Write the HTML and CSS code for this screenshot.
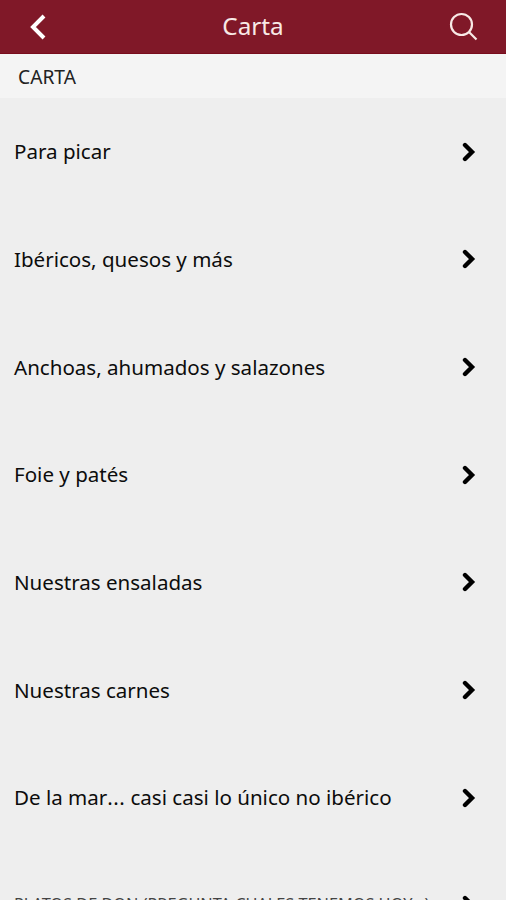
FILE: index.html
```html
<!DOCTYPE html>
<html lang="es">
<head>
<meta charset="utf-8">
<title>Carta</title>
<link rel="stylesheet" href="styles.css">
</head>
<body>
<header class="bar">
<svg class="back" viewBox="0 0 20 28"><path d="M16 3 5 14l11 11"/></svg>
<h1 class="title">Carta</h1>
<svg class="search" viewBox="0 0 30 30"><circle cx="12.5" cy="12.5" r="10.5"/><path d="m20 20 7.5 7.5"/></svg>
</header>
<h2 class="section">CARTA</h2>
<ul class="list">
<li class="row"><span class="label">Para picar</span><svg class="chev" viewBox="0 0 14 20"><path d="m3 3 7 7-7 7"/></svg></li>
<li class="row"><span class="label">Ibéricos, quesos y más</span><svg class="chev" viewBox="0 0 14 20"><path d="m3 3 7 7-7 7"/></svg></li>
<li class="row"><span class="label">Anchoas, ahumados y salazones</span><svg class="chev" viewBox="0 0 14 20"><path d="m3 3 7 7-7 7"/></svg></li>
<li class="row"><span class="label">Foie y patés</span><svg class="chev" viewBox="0 0 14 20"><path d="m3 3 7 7-7 7"/></svg></li>
<li class="row"><span class="label">Nuestras ensaladas</span><svg class="chev" viewBox="0 0 14 20"><path d="m3 3 7 7-7 7"/></svg></li>
<li class="row"><span class="label">Nuestras carnes</span><svg class="chev" viewBox="0 0 14 20"><path d="m3 3 7 7-7 7"/></svg></li>
<li class="row"><span class="label">De la mar<span class="dots">...</span> casi casi lo único no ibérico</span><svg class="chev" viewBox="0 0 14 20"><path d="m3 3 7 7-7 7"/></svg></li>
<li class="row last"><span class="label">PLATOS DE DON (PREGUNTA CUALES TENEMOS HOY...)</span><svg class="chev" viewBox="0 0 14 20"><path d="m3 3 7 7-7 7"/></svg></li>
</ul>
</body>
</html>
```
FILE: styles.css
```css
* { box-sizing: border-box; }
body {
  margin: 0;
  height: 900px;
  overflow: hidden;
  background: #eee;
  color: #0c0c0c;
  font-family: "Noto Sans", sans-serif;
}
svg { fill: none; stroke: currentColor; flex: none; }
.bar {
  display: grid;
  grid-template-columns: 60px 1fr 60px;
  align-items: center;
  height: 54px;
  background: #801828;
  border-bottom: 1px solid #780c1c;
  color: #f8e9e6;
}
.title { margin: 0; text-align: center; font-size: 24.3px; font-weight: 400; line-height: 51px; height: 53px; }
.back { width: 20px; height: 28px; margin-left: 28px; stroke-width: 4; stroke: #fff; }
.search { width: 30px; height: 30px; margin-left: 3px; stroke-width: 2.2; }
.section {
  margin: 0;
  height: 44px;
  padding-left: 18px;
  background: #f4f4f4;
  color: #222;
  font-size: 19.2px;
  font-weight: 400;
  line-height: 46px;
}
.list { margin: 0; padding: 0; list-style: none; height: 802px; overflow: hidden; }
.row {
  display: flex;
  align-items: center;
  justify-content: space-between;
  height: 107.7px;
  padding: 0 30px 0.5px 14px;
  font-size: 20.55px;
}
.label { white-space: nowrap; line-height: 28px; padding-bottom: 0.5px; }
.dots { letter-spacing: 0.4px; }
.last { font-size: 16.3px; color: #444; }
.last .label { padding: 0 0 2px; }
.chev { width: 14px; height: 20px; color: #000; stroke-width: 4.4; stroke-linecap: round; }
```
